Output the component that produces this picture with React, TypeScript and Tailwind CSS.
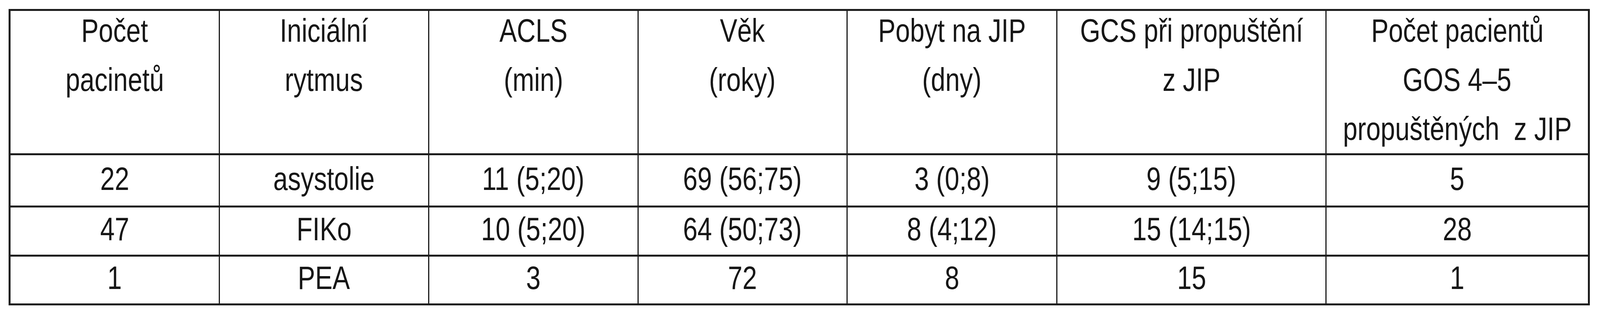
import React, { useEffect, useState } from "react";

const header: string[][] = [
  ["Počet", "pacinetů"],
  ["Iniciální", "rytmus"],
  ["ACLS", "(min)"],
  ["Věk", "(roky)"],
  ["Pobyt na JIP", "(dny)"],
  ["GCS při propuštění", "z JIP"],
  ["Počet pacientů", "GOS 4–5", "propuštěných  z JIP"],
];

const rows: { cells: string[]; h: string; pt: string }[] = [
  {
    cells: ["22", "asystolie", "11 (5;20)", "69 (56;75)", "3 (0;8)", "9 (5;15)", "5"],
    h: "h-[134px]",
    pt: "pt-[13px]",
  },
  {
    cells: ["47", "FIKo", "10 (5;20)", "64 (50;73)", "8 (4;12)", "15 (14;15)", "28"],
    h: "h-[126px]",
    pt: "pt-[8px]",
  },
  {
    cells: ["1", "PEA", "3", "72", "8", "15", "1"],
    h: "h-[125px]",
    pt: "pt-[7px]",
  },
];

const grid = "grid grid-cols-[671fr_675fr_675fr_674fr_677fr_868fr_846fr]";
const line = "border-[#1c1c1c]";

export default function App() {
  // the design is 5157px wide; text is squeezed to the width the page actually gets
  const [k, setK] = useState(() =>
    typeof window !== "undefined" ? Math.min(1, window.innerWidth / 5157) : 1
  );
  useEffect(() => {
    const f = () => setK(Math.min(1, window.innerWidth / 5157));
    f();
    window.addEventListener("resize", f);
    return () => window.removeEventListener("resize", f);
  }, []);
  const squeeze = { transform: `scaleX(${k})` };

  return (
    <div
      className="w-full h-[800px] bg-white text-[#161616] pt-[23px]"
      style={{ fontFamily: '"Liberation Sans", Arial, Helvetica, sans-serif' }}
    >
      <div className={`ml-[0.543%] w-[98.82%] border-x-[5px] border-t-[5px] ${line}`}>
        {/* header */}
        <div className={`${grid} h-[370px] border-b-[5px] ${line}`}>
          {header.map((lines, i) => (
            <div
              key={i}
              className={`min-w-0 flex flex-col items-center gap-[26px] ${i > 0 ? `border-l-[3px] ${line}` : ""}`}
            >
              {lines.map((l, j) => (
                <div key={j} className="text-[84px] leading-[100px] whitespace-pre" style={squeeze}>
                  {l}
                </div>
              ))}
            </div>
          ))}
        </div>
        {/* body */}
        {rows.map((r, ri) => (
          <div key={ri} className={`${grid} ${r.h} border-b-[5px] ${line}`}>
            {r.cells.map((c, i) => (
              <div
                key={i}
                className={`min-w-0 flex justify-center ${r.pt} ${i > 0 ? `border-l-[3px] ${line}` : ""}`}
              >
                <div className="text-[84px] leading-[94px] whitespace-pre" style={squeeze}>
                  {c}
                </div>
              </div>
            ))}
          </div>
        ))}
      </div>
    </div>
  );
}
